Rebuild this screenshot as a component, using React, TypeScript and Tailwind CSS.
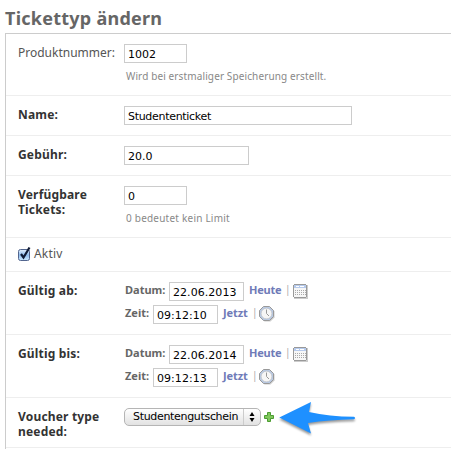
import type { ReactNode } from "react";

function Row({ height, label, children }: { height: string; label?: string; children: ReactNode }) {
  return (
    <div className={`flex border-b border-[#eee] pl-3 pt-[10px] ${height}`}>
      {label && (
        <div className="w-[106px] shrink-0 whitespace-pre-line pt-px text-[12px] font-bold leading-[15px] tracking-[0.18px] text-[#333]">
          {label}
        </div>
      )}
      {children}
    </div>
  );
}

function Field({ value, width }: { value: string; width: string }) {
  return (
    <input
      defaultValue={value}
      className={`block h-[19px] shrink-0 border border-[#ccc] bg-white pl-[3px] pt-[2px] font-['DejaVu_Sans','Noto_Sans',sans-serif] text-[11px] font-normal text-black outline-none ${width}`}
    />
  );
}

function Calendar() {
  return (
    <svg width="16" height="16" viewBox="0 0 16 16" shapeRendering="crispEdges" className="shrink-0">
      <path d="M1 1h14v14H1z" fill="#ccc" />
      <path d="M1 0h12v1h1v12h-1v1H1v-1H0V1h1z" fill="#999" />
      <path d="M1 1h12v3H1z" fill="#b7cbed" />
      <path d="M3 2h3v1H3zM7 2h4v1H7z" fill="#fff" />
      <path d="M1 4h12v9H1z" fill="#f7f7f7" />
      <path d="M2 6.5h11M2 8.5h11M2 10.5h11" stroke="#aaa" strokeDasharray="1 1" />
    </svg>
  );
}

function Clock() {
  return (
    <svg width="16" height="16" viewBox="0 0 16 16" className="shrink-0">
      <path d="M5.5 1.5h6l4 4v6l-4 4h-6l-4-4v-6z" fill="#ccc" />
      <path d="M4.5.5h6l4 4v6l-4 4h-6l-4-4v-6z" fill="#b9c9e2" stroke="#999" />
      <circle cx="7.5" cy="7.5" r="5.3" fill="#f6f6f6" stroke="#bbb" strokeWidth=".5" />
      <path d="M7.5 3.5v4l2.5 2.5" fill="none" stroke="#999" />
    </svg>
  );
}

function DateTime({ date, time }: { date: string; time: string }) {
  return (
    <div className="pl-px text-[11px] font-bold leading-[15px] text-[#666]">
      <div className="flex h-[23px] items-start">
        <span className="w-[44px]">Datum:</span>
        <Field value={date} width="w-[75px] tracking-[0.05px]" />
        <span className="ml-[5px] w-[36px] tracking-[-0.25px] text-[#6f7bb8]">Heute</span>
        <span className="w-[8px] text-[10px] font-normal text-[#aaa]">|</span>
        <div className="mt-[2px]"><Calendar /></div>
      </div>
      <div className="flex items-start">
        <span className="w-[28px]">Zeit:</span>
        <Field value={time} width="w-[65px] tracking-[0.05px]" />
        <span className="ml-[5px] w-[29px] tracking-[-0.1px] text-[#6f7bb8]">Jetzt</span>
        <span className="w-[7px] text-[10px] font-normal text-[#aaa]">|</span>
        <div className="mt-px"><Clock /></div>
      </div>
    </div>
  );
}

export default function App() {
  return (
    <div className="h-[449px] w-[451px] overflow-hidden bg-white pl-[5px] font-['Noto_Sans','Open_Sans',sans-serif]">
      <h1 className="h-[33px] pt-[6px] text-[18px] font-bold leading-[24px] tracking-[0.25px] text-[#666]">Tickettyp ändern</h1>
      <div className="h-[416px] border-l border-t border-[#ccc]">
        <Row height="h-[62px]">
          <div className="w-[106px] shrink-0 pt-px text-[12px] leading-[15px] text-[#555]">Produktnummer:</div>
          <div>
            <Field value="1002" width="w-[63px]" />
            <p className="ml-[2px] mt-[6px] text-[10px] leading-[14px] tracking-[0.12px] text-[#888]">Wird bei erstmaliger Speicherung erstellt.</p>
          </div>
        </Row>
        <Row height="h-[40px]" label="Name:">
          <Field value="Studententicket" width="w-[228px] tracking-[-0.3px]" />
        </Row>
        <Row height="h-[40px]" label="Gebühr:">
          <Field value="20.0" width="w-[125px]" />
        </Row>
        <Row height="h-[62px]" label={"Verfügbare\nTickets:"}>
          <div>
            <Field value="0" width="w-[63px]" />
            <p className="ml-[2px] mt-[6px] text-[10px] leading-[14px] tracking-[0.22px] text-[#888]">0 bedeutet kein Limit</p>
          </div>
        </Row>
        <Row height="h-[34px]">
          <svg width="14" height="15" viewBox="0 0 14 15" className="-mt-[2px]">
            <defs>
              <linearGradient id="check" x1="0" y1="0" x2="0" y2="1">
                <stop offset="0" stopColor="#e5f0fc" />
                <stop offset=".5" stopColor="#91bdee" />
                <stop offset="1" stopColor="#cdeaff" />
              </linearGradient>
            </defs>
            <rect x=".5" y="3.5" width="11" height="11" rx="2" fill="url(#check)" stroke="#52658e" />
            <path d="M3 8l2.5 3.5L11.5 1.5" fill="none" stroke="#101b35" strokeWidth="2.2" />
          </svg>
          <span className="-mt-[2px] ml-[2px] text-[12px] leading-[15px] tracking-[0.2px] text-[#555]">Aktiv</span>
        </Row>
        <Row height="h-[63px]" label="Gültig ab:">
          <DateTime date="22.06.2013" time="09:12:10" />
        </Row>
        <Row height="h-[63px]" label="Gültig bis:">
          <DateTime date="22.06.2014" time="09:12:13" />
        </Row>
        <Row height="h-[50px]" label={"Voucher type\nneeded:"}>
          <button className="flex h-[18px] w-[137px] items-center rounded-[5px] border border-[#b5b5b5] bg-linear-to-b from-white to-[#e2e2e2] pl-2 font-['DejaVu_Sans','Noto_Sans',sans-serif] text-[11px] tracking-[-0.32px] text-black">
            <span className="w-[110px] shrink-0 pt-px text-left">Studentengutschein</span>
            <span className="flex h-full w-[16px] items-center justify-center border-l border-[#ccc]">
              <svg width="6" height="10" viewBox="0 0 6 10"><path d="M3 0l2.5 4h-5zM3 10L.5 6h5z" /></svg>
            </span>
          </button>
          <svg width="10" height="10" viewBox="0 0 10 10" className="ml-[3px] mt-1">
            <path d="M3.5.5h3v3h3v3h-3v3h-3v-3h-3v-3h3z" fill="#7fc75c" stroke="#4c9c32" />
          </svg>
          <svg width="82" height="38" viewBox="0 0 82 38" className="-mt-[7px] ml-[3px]">
            <path d="M2.300 16.500L34 1L32 11Q52 15.500 77 15.800Q79 17 77 18.300Q52 19 31 22L34 32.500Z" fill="#1e90ff" className="drop-shadow-[0_2px_1px_rgba(0,0,0,0.4)]" />
          </svg>
        </Row>
      </div>
    </div>
  );
}
